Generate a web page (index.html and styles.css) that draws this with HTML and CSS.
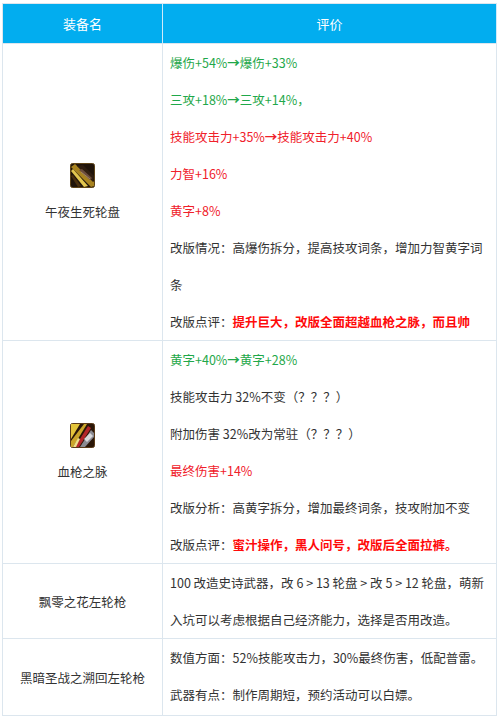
FILE: index.html
```html
<!DOCTYPE html>
<html lang="zh-CN">
<head>
<meta charset="utf-8">
<title>装备评价</title>
<link rel="stylesheet" href="styles.css">
</head>
<body>
<table class="gear">
  <colgroup><col class="col-name"><col class="col-eval"></colgroup>
  <thead>
    <tr><th>装备名</th><th>评价</th></tr>
  </thead>
  <tbody>
    <tr>
      <td class="name">
        <div class="item">
          <svg class="icon" viewBox="0 0 25 25" width="25" height="25">
            <rect x="0.5" y="0.5" width="24" height="24" rx="2" fill="#20140a" stroke="#5e4418"/>
            <polygon points="1,4 5,1 24,19 24,23 21,24" fill="#a8831f"/>
            <polygon points="1,8 3,6 18,23 14,24" fill="#e2c64e"/>
            <polygon points="7,3 13,2 24,13 23,19" fill="#2f1e10"/>
            <polygon points="9,7 12,6 22,15 20,17" fill="#6a4c3c"/>
            <line x1="11" y1="9" x2="20" y2="16" stroke="#a88e74" stroke-width="0.8"/>
            <polygon points="1,13 3,12 11,23 8,24" fill="#4a300e"/>
          </svg>
          <span>午夜生死轮盘</span>
        </div>
      </td>
      <td class="eval">
        <p class="green">爆伤+54%<span class="arr">→</span>爆伤+33%</p>
        <p class="green">三攻+18%<span class="arr">→</span>三攻+14%，</p>
        <p class="red">技能攻击力+35%<span class="arr">→</span>技能攻击力+40%</p>
        <p class="red">力智+16%</p>
        <p class="red">黄字+8%</p>
        <p>改版情况：高爆伤拆分，提高技攻词条，增加力智黄字词条</p>
        <p>改版点评：<strong class="hot">提升巨大，改版全面超越血枪之脉，而且帅</strong></p>
      </td>
    </tr>
    <tr>
      <td class="name">
        <div class="item">
          <svg class="icon" viewBox="0 0 25 25" width="25" height="25">
            <rect x="0.5" y="0.5" width="24" height="24" rx="2" fill="#2a1608" stroke="#5a3a18"/>
            <polygon points="1,1 10,1 1,16" fill="#e3c43a"/>
            <polygon points="1,18 14,1 17,1 3,24 1,24" fill="#caa52a"/>
            <polygon points="5,24 18,3 21,5 9,24" fill="#b3262a"/>
            <polygon points="10,24 21,7 24,10 24,14 15,24" fill="#8a8a92"/>
            <polygon points="14,16 20,10 23,13 17,19" fill="#d8d8dc"/>
            <polygon points="3,24 8,15 10,16 6,24" fill="#f0e08a"/>
          </svg>
          <span>血枪之脉</span>
        </div>
      </td>
      <td class="eval">
        <p class="green">黄字+40%<span class="arr">→</span>黄字+28%</p>
        <p>技能攻击力 32%不变（？？？）</p>
        <p>附加伤害 32%改为常驻（？？？）</p>
        <p class="red">最终伤害+14%</p>
        <p>改版分析：高黄字拆分，增加最终词条，技攻附加不变</p>
        <p>改版点评：<strong class="hot">蜜汁操作，黑人问号，改版后全面拉裤。</strong></p>
      </td>
    </tr>
    <tr>
      <td class="name"><span>飘零之花左轮枪</span></td>
      <td class="eval">
        <p>100 改造史诗武器，改 6 &gt; 13 轮盘 &gt; 改 5 &gt; 12 轮盘，萌新入坑可以考虑根据自己经济能力，选择是否用改造。</p>
      </td>
    </tr>
    <tr class="last">
      <td class="name"><span>黑暗圣战之溯回左轮枪</span></td>
      <td class="eval">
        <p>数值方面：52%技能攻击力，30%最终伤害，低配普雷。</p>
        <p>武器有点：制作周期短，预约活动可以白嫖。</p>
      </td>
    </tr>
  </tbody>
</table>
</body>
</html>
```

FILE: styles.css
```css
html, body {
  margin: 0;
  padding: 0;
  background: #ffffff;
}

body {
  font-family: "Noto Sans CJK SC", "Microsoft YaHei", sans-serif;
  color: #333333;
  padding: 3px 0 0 2px;
}

.gear {
  border-collapse: collapse;
  width: 494px;
  table-layout: fixed;
  border: 1px solid #dce6ee;
}

.col-name { width: 160px; }
.col-eval { width: 334px; }

.gear th {
  background: #02adef;
  color: #ffffff;
  font-weight: normal;
  font-size: 13px;
  height: 39px;
  padding: 0;
  text-align: center;
  border-right: 1px solid #cfeafa;
  border-bottom: 1px solid #dce6ee;
}

.gear td {
  border: 1px solid #dce6ee;
  padding: 0;
  font-size: 12.5px;
  vertical-align: middle;
}

.name {
  text-align: center;
}

.item {
  display: flex;
  flex-direction: column;
  align-items: center;
  gap: 14px;
  line-height: 20px;
}

.icon {
  display: block;
}

.eval {
  padding: 0 4px 0 7px !important;
}

.last .eval {
  padding-bottom: 2px !important;
}

.eval p {
  margin: 0;
  line-height: 37px;
}

.arr {
  font-weight: bold;
}

.green { color: #1fa84a; }
.red { color: #f0202a; }

.hot {
  color: #ff0a0a;
  font-weight: bold;
}
```
